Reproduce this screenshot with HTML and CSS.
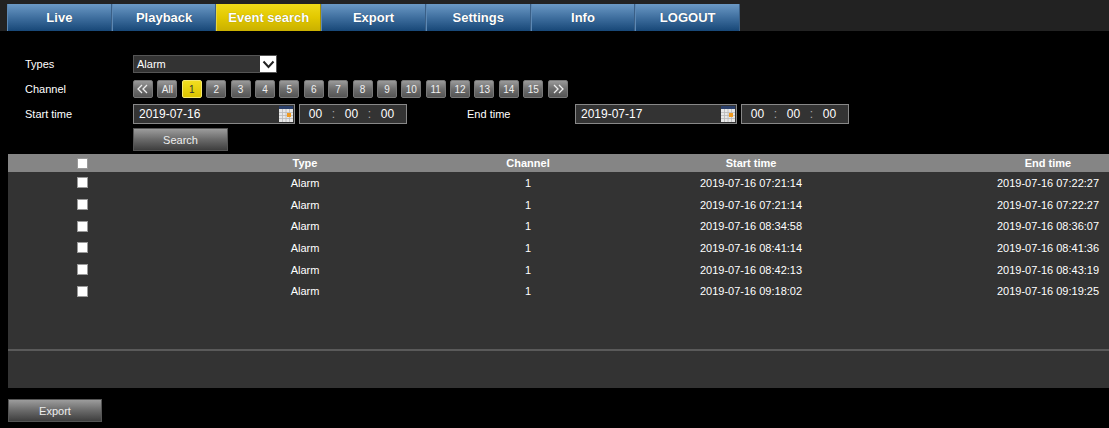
FILE: index.html
```html
<!DOCTYPE html>
<html lang="en">
<head>
    <meta charset="UTF-8">
    <title>Event search</title>
    <link rel="stylesheet" href="styles.css">
</head>
<body>
    <!-- Top menu -->
    <div class="topbar">
        <div class="menu">
            <div class="tab">Live</div>
            <div class="tab">Playback</div>
            <div class="tab active">Event search</div>
            <div class="tab">Export</div>
            <div class="tab">Settings</div>
            <div class="tab">Info</div>
            <div class="tab">LOGOUT</div>
        </div>
    </div>

    <!-- Search form -->
    <div class="search-form">
        <div class="form-row row-types">
            <span class="label">Types</span>
            <div class="select">
                <span>Alarm</span>
                <span class="select-arrow">
                    <svg width="13" height="9" viewBox="0 0 13 9"><polyline points="1.5,1.5 6.5,7 11.5,1.5" fill="none" stroke="#222" stroke-width="2"/></svg>
                </span>
            </div>
        </div>
        <div class="form-row row-channel">
            <span class="label">Channel</span>
            <div class="channels">
                <div class="ch">
                    <svg width="12" height="10" viewBox="0 0 12 10"><polyline points="5,1 1,5 5,9" fill="none" stroke="#eee" stroke-width="1.3"/><polyline points="10,1 6,5 10,9" fill="none" stroke="#eee" stroke-width="1.3"/></svg>
                </div>
                <div class="ch">All</div>
                <div class="ch active">1</div>
                <div class="ch">2</div>
                <div class="ch">3</div>
                <div class="ch">4</div>
                <div class="ch">5</div>
                <div class="ch">6</div>
                <div class="ch">7</div>
                <div class="ch">8</div>
                <div class="ch">9</div>
                <div class="ch">10</div>
                <div class="ch">11</div>
                <div class="ch">12</div>
                <div class="ch">13</div>
                <div class="ch">14</div>
                <div class="ch">15</div>
                <div class="ch">
                    <svg width="12" height="10" viewBox="0 0 12 10"><polyline points="2,1 6,5 2,9" fill="none" stroke="#eee" stroke-width="1.3"/><polyline points="7,1 11,5 7,9" fill="none" stroke="#eee" stroke-width="1.3"/></svg>
                </div>
            </div>
        </div>
        <div class="form-row row-time">
            <span class="label">Start time</span>
            <div class="date-input">
                <span>2019-07-16</span>
                <svg class="cal" width="14" height="16" viewBox="0 0 14 16">
                    <rect x="0" y="0" width="14" height="16" fill="#e8e8e8"/>
                    <rect x="0" y="0" width="14" height="3" fill="#2a3f6a"/>
                    <path d="M0 6.5H14M0 9.5H14M0 12.5H14M3.5 3V16M7 3V16M10.5 3V16" stroke="#b8b8b8" stroke-width="0.8"/>
                    <rect x="8" y="7" width="4" height="4" fill="#f09a20"/>
                </svg>
            </div>
            <div class="time-input">
                <span>00</span><span class="colon">:</span><span>00</span><span class="colon">:</span><span>00</span>
            </div>
            <span class="end-label">End time</span>
            <div class="date-input">
                <span>2019-07-17</span>
                <svg class="cal" width="14" height="16" viewBox="0 0 14 16">
                    <rect x="0" y="0" width="14" height="16" fill="#e8e8e8"/>
                    <rect x="0" y="0" width="14" height="3" fill="#2a3f6a"/>
                    <path d="M0 6.5H14M0 9.5H14M0 12.5H14M3.5 3V16M7 3V16M10.5 3V16" stroke="#b8b8b8" stroke-width="0.8"/>
                    <rect x="8" y="7" width="4" height="4" fill="#f09a20"/>
                </svg>
            </div>
            <div class="time-input">
                <span>00</span><span class="colon">:</span><span>00</span><span class="colon">:</span><span>00</span>
            </div>
        </div>
        <div class="form-row row-search">
            <span class="label"></span>
            <div class="gray-button search-button">Search</div>
        </div>
    </div>

    <!-- Result table -->
    <div class="result-panel">
        <div class="result-list">
            <div class="result-row header">
                <div class="col col-check"><span class="checkbox"></span></div>
                <div class="col col-type">Type</div>
                <div class="col col-channel">Channel</div>
                <div class="col col-start">Start time</div>
                <div class="col col-end">End time</div>
            </div>
            <div class="result-row">
                <div class="col col-check"><span class="checkbox"></span></div>
                <div class="col col-type">Alarm</div>
                <div class="col col-channel">1</div>
                <div class="col col-start">2019-07-16 07:21:14</div>
                <div class="col col-end">2019-07-16 07:22:27</div>
            </div>
            <div class="result-row">
                <div class="col col-check"><span class="checkbox"></span></div>
                <div class="col col-type">Alarm</div>
                <div class="col col-channel">1</div>
                <div class="col col-start">2019-07-16 07:21:14</div>
                <div class="col col-end">2019-07-16 07:22:27</div>
            </div>
            <div class="result-row">
                <div class="col col-check"><span class="checkbox"></span></div>
                <div class="col col-type">Alarm</div>
                <div class="col col-channel">1</div>
                <div class="col col-start">2019-07-16 08:34:58</div>
                <div class="col col-end">2019-07-16 08:36:07</div>
            </div>
            <div class="result-row">
                <div class="col col-check"><span class="checkbox"></span></div>
                <div class="col col-type">Alarm</div>
                <div class="col col-channel">1</div>
                <div class="col col-start">2019-07-16 08:41:14</div>
                <div class="col col-end">2019-07-16 08:41:36</div>
            </div>
            <div class="result-row">
                <div class="col col-check"><span class="checkbox"></span></div>
                <div class="col col-type">Alarm</div>
                <div class="col col-channel">1</div>
                <div class="col col-start">2019-07-16 08:42:13</div>
                <div class="col col-end">2019-07-16 08:43:19</div>
            </div>
            <div class="result-row">
                <div class="col col-check"><span class="checkbox"></span></div>
                <div class="col col-type">Alarm</div>
                <div class="col col-channel">1</div>
                <div class="col col-start">2019-07-16 09:18:02</div>
                <div class="col col-end">2019-07-16 09:19:25</div>
            </div>
        </div>
        <div class="result-footer"></div>
    </div>

    <div class="gray-button export-button">Export</div>
</body>
</html>
```

FILE: styles.css
```css
body {
    margin: 0;
    background-color: #000;
    color: #fff;
    font-family: "Liberation Sans", Arial, sans-serif;
    font-size: 11px;
    overflow: hidden;
}

/* Top menu */
.topbar {
    background-color: #222;
    height: 31px;
    padding: 4px 0 0 7px;
    box-sizing: border-box;
}
.menu {
    display: flex;
    width: 733px;
    height: 27px;
}
.tab {
    flex: 1;
    display: flex;
    justify-content: center;
    align-items: center;
    background: linear-gradient(#6b99c5, #3f6f9f 50%, #174777);
    border-right: 1px solid #3a5f86;
    border-left: 1px solid #5c88b4;
    font-size: 13px;
    font-weight: bold;
    color: #fff;
    text-shadow: 0 0 1px rgba(0, 0, 0, 0.4);
}
.tab.active {
    background: linear-gradient(#f0da18, #e2c800 50%, #c9b000);
    border-left-color: #e8d640;
    border-right-color: #a89200;
}

/* Search form */
.search-form {
    padding: 24px 0 0 25px;
}
.form-row {
    display: flex;
    align-items: center;
}
.label {
    width: 108px;
    flex-shrink: 0;
}
.row-types {
    height: 18px;
}
.row-channel {
    height: 18px;
    margin-top: 7px;
}
.row-time {
    height: 20px;
    margin-top: 6px;
}
.row-search {
    height: 23px;
    margin-top: 4px;
}
.select {
    display: flex;
    justify-content: space-between;
    align-items: center;
    width: 144px;
    height: 18px;
    box-sizing: border-box;
    background-color: #333;
    border: 1px solid #555;
    padding-left: 3px;
}
.select-arrow {
    display: flex;
    justify-content: center;
    align-items: center;
    width: 16px;
    height: 16px;
    background-color: #fff;
}
.channels {
    display: flex;
    gap: 4.4px;
}
.ch {
    display: flex;
    justify-content: center;
    align-items: center;
    width: 20px;
    height: 18px;
    box-sizing: border-box;
    background: linear-gradient(#9a9a9a, #6e6e6e 50%, #555);
    border: 1px solid #777;
    border-radius: 2px;
    color: #f0f0f0;
    font-size: 10px;
}
.ch.active {
    background: linear-gradient(#f2de20, #dcc400);
    border-color: #f6e870;
    color: #333;
}
.date-input {
    display: flex;
    justify-content: space-between;
    align-items: center;
    width: 162px;
    height: 20px;
    box-sizing: border-box;
    background-color: #333;
    border: 1px solid #888;
    padding: 0 0 0 5px;
    font-size: 12px;
}
.cal {
    display: block;
    margin-right: 1px;
}
.time-input {
    display: flex;
    align-items: center;
    width: 108px;
    height: 20px;
    box-sizing: border-box;
    margin-left: 4px;
    background-color: #333;
    border: 1px solid #888;
    padding-left: 5px;
    font-size: 12px;
}
.time-input span {
    width: 21px;
    text-align: center;
}
.time-input .colon {
    width: 15px;
    color: #aaa;
}
.end-label {
    width: 168px;
    padding-left: 60px;
    box-sizing: border-box;
}
.gray-button {
    display: flex;
    justify-content: center;
    align-items: center;
    box-sizing: border-box;
    background: linear-gradient(#9c9c9c, #6a6a6a 50%, #3e3e3e);
    border: 1px solid #555;
    color: #eee;
}
.search-button {
    width: 95px;
    height: 23px;
}

/* Result table - the end time column runs to the window edge */
.result-panel {
    margin: 3px 0 0 8px;
    background-color: #333;
}
.result-list {
    height: 195px;
    border-bottom: 2px solid #5a5a5a;
}
.result-row {
    display: flex;
    align-items: center;
    height: 21.7px;
}
.result-row.header {
    height: 18px;
    background-color: #858585;
    font-weight: bold;
}
.col {
    text-align: center;
    color: #fff;
}
.col-check {
    width: 148px;
    display: flex;
    justify-content: center;
}
.col-type {
    width: 298px;
}
.col-channel {
    width: 148px;
}
.col-start {
    width: 298px;
}
.col-end {
    flex: 1;
    padding-left: 87px;
    white-space: nowrap;
}
.checkbox {
    width: 11px;
    height: 11px;
    box-sizing: border-box;
    background-color: #fff;
    border: 1px solid #999;
}
.result-footer {
    height: 37px;
}
.export-button {
    width: 94px;
    height: 23px;
    margin: 11px 0 0 8px;
}
```
